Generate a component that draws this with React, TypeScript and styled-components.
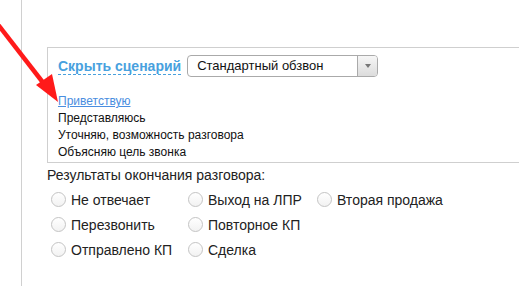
import { useState } from 'react'
import styled, { createGlobalStyle } from 'styled-components'

const GlobalStyle = createGlobalStyle`
  html, body {
    margin: 0;
    padding: 0;
    background: #fff;
    overflow: hidden;
  }
  body {
    font-family: "Liberation Sans", Arial, sans-serif;
    color: #222;
  }
`

const Page = styled.div`
  position: relative;
  height: 286px;
  margin-left: 21px;
  border-left: 1px solid #d0d0d0;
  padding: 47px 0 0 25px;
  box-sizing: border-box;
`

const Arrow = styled.svg`
  position: absolute;
  left: -22px;
  top: 0;
  pointer-events: none;
`

// the box runs on past the right edge of the window, so no right border
const ScriptBox = styled.div`
  border: 1px solid #cfcfcf;
  border-right: none;
  padding: 7px 0 1px 10px;
`

const Header = styled.div`
  display: flex;
  align-items: center;
  gap: 6px;
  height: 22px;
`

const Toggle = styled.a`
  font-size: 14px;
  font-weight: bold;
  color: #48a1de;
  text-decoration: none;
  border-bottom: 1px dashed #48a1de;
  line-height: 15px;
  margin-top: 2px;
  cursor: pointer;
`

const Select = styled.div`
  display: flex;
  width: 191px;
  height: 22px;
  border: 1px solid #aaa;
  border-radius: 4px;
  box-sizing: border-box;
  overflow: hidden;
  background: #fff;
`

const SelectValue = styled.div`
  flex: 1;
  font-size: 13px;
  line-height: 20px;
  padding-left: 9px;
  color: #111;
`

const SelectButton = styled.div`
  width: 19px;
  border-left: 1px solid #aaa;
  background: linear-gradient(#f6f6f6, #dcdcdc);
  display: flex;
  align-items: center;
  justify-content: center;
  &::after {
    content: '';
    border-left: 3px solid transparent;
    border-right: 3px solid transparent;
    border-top: 4px solid #777;
  }
`

const Steps = styled.ul`
  list-style: none;
  margin: 16px 0 0;
  padding: 0;
`

const Step = styled.li<{ $active?: boolean }>`
  font-size: 12px;
  line-height: 17px;
  color: ${({ $active }) => ($active ? '#4a8ee0' : '#111')};
  text-decoration: ${({ $active }) => ($active ? 'underline' : 'none')};
`

const ResultTitle = styled.div`
  font-size: 14px;
  line-height: 17px;
  margin-top: 4px;
  color: #222;
`

const Options = styled.div`
  display: grid;
  grid-template-columns: 137px 129px 140px;
  grid-auto-rows: 25px;
  margin-top: 3px;
  padding-left: 4px;
`

const Option = styled.label`
  display: flex;
  align-items: center;
  gap: 5px;
  font-size: 14px;
  color: #222;
  cursor: pointer;
`

const Radio = styled.span<{ $checked?: boolean }>`
  width: 15px;
  height: 15px;
  border-radius: 50%;
  border: 1px solid #c4c4c4;
  box-sizing: border-box;
  background: ${({ $checked }) =>
    $checked ? 'radial-gradient(#4a8ee0 35%, #fff 40%)' : 'linear-gradient(#fff, #f2f2f2)'};
`

const steps = [
  'Приветствую',
  'Представляюсь',
  'Уточняю, возможность разговора',
  'Объясняю цель звонка',
]

// grid order: row by row, empty cells left blank
const options = [
  'Не отвечает',
  'Выход на ЛПР',
  'Вторая продажа',
  'Перезвонить',
  'Повторное КП',
  null,
  'Отправлено КП',
  'Сделка',
  null,
]

export default function App() {
  const [selected, setSelected] = useState<string | null>(null)

  return (
    <>
      <GlobalStyle />
      <Page>
        <ScriptBox>
          <Header>
            <Toggle>Скрыть сценарий</Toggle>
            <Select>
              <SelectValue>Стандартный обзвон</SelectValue>
              <SelectButton />
            </Select>
          </Header>
          <Steps>
            {steps.map((s, i) => (
              <Step key={s} $active={i === 0}>
                {s}
              </Step>
            ))}
          </Steps>
        </ScriptBox>
        <ResultTitle>Результаты окончания разговора:</ResultTitle>
        <Options>
          {options.map((o, i) =>
            o ? (
              <Option key={o} onClick={() => setSelected(o)}>
                <Radio $checked={selected === o} />
                {o}
              </Option>
            ) : (
              <span key={i} />
            )
          )}
        </Options>
        <Arrow width="70" height="110" viewBox="0 0 70 110">
          <line x1="-4" y1="22" x2="48" y2="89" stroke="#ff1a1a" strokeWidth="4.5" />
          <polygon points="58,102 36,85 52,74" fill="#ff1a1a" />
        </Arrow>
      </Page>
    </>
  )
}
